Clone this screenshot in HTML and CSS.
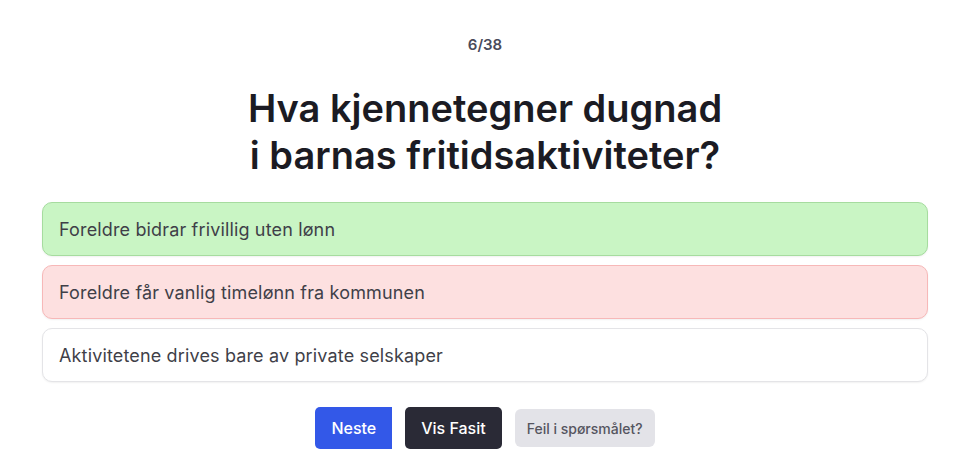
FILE: index.html
```html
<!DOCTYPE html>
<html lang="no">
<head>
<meta charset="utf-8">
<link rel="stylesheet" href="styles.css">
</head>
<body>
<main class="quiz">
  <div class="counter">6/38</div>
  <h1 class="question">Hva kjennetegner dugnad<br>i barnas fritidsaktiviteter?</h1>
  <div class="options">
    <div class="option correct">Foreldre bidrar frivillig uten lønn</div>
    <div class="option wrong">Foreldre får vanlig timelønn fra kommunen</div>
    <div class="option">Aktivitetene drives bare av private selskaper</div>
  </div>
  <div class="actions">
    <button class="btn btn-next">Neste</button>
    <button class="btn btn-fasit">Vis Fasit</button>
    <button class="btn btn-report">Feil i spørsmålet?</button>
  </div>
</main>
</body>
</html>
```
FILE: styles.css
```css
* { box-sizing: border-box; }
html, body { margin: 0; padding: 0; background: #ffffff; }
body {
  font-family: Inter, "Noto Sans", "Liberation Sans", sans-serif;
  color: #1c1c24;
}
.quiz {
  padding: 35px 35px 0 42px;
  display: flex;
  flex-direction: column;
  align-items: center;
}
.counter {
  font-size: 15px;
  font-weight: 600;
  color: #4a4a5a;
  line-height: 20px;
}
.question {
  margin: 30px 0 0 0;
  font-size: 38px;
  font-weight: 600;
  line-height: 47px;
  text-align: center;
  color: #1b1b23;
  letter-spacing: 0;
}
.options {
  width: 100%;
  margin-top: 23px;
  display: flex;
  flex-direction: column;
  gap: 9px;
}
.option {
  height: 54px;
  display: flex;
  align-items: center;
  padding: 0 16px;
  border: 1px solid #e4e4e7;
  border-radius: 10px;
  font-size: 18px;
  letter-spacing: 0.15px;
  color: #3f3f48;
  background: #ffffff;
  box-shadow: 0 1px 2px rgba(0,0,0,0.06);
}
.option.correct { background: #c9f5c4; border-color: #a6dc9f; }
.option.wrong { background: #fde0e0; border-color: #f7b8b8; }
.actions {
  margin-top: 25px;
  display: flex;
  align-items: center;
  gap: 13px;
}
.btn {
  font-family: inherit;
  border: none;
  cursor: pointer;
}
.btn-next {
  height: 42px;
  padding: 0 16px;
  background: #3358e8;
  color: #ffffff;
  font-size: 16px;
  font-weight: 500;
  border-radius: 5px 0 0 5px;
}
.btn-fasit {
  height: 42px;
  padding: 0 16px;
  background: #2a2a36;
  color: #ffffff;
  font-size: 16px;
  font-weight: 500;
  border-radius: 5px;
}
.btn-report {
  height: 38px;
  padding: 0 12px;
  background: #e3e3e8;
  color: #55555f;
  font-size: 14px;
  font-weight: 500;
  border-radius: 6px;
}
```
